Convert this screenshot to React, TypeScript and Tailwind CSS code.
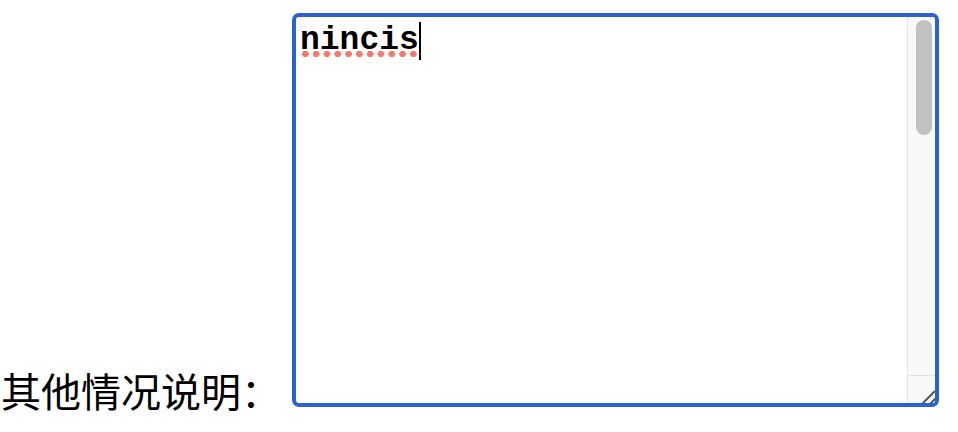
import React from 'react';

const App: React.FC = () => {
  return (
    <div className="w-[958px] h-[432px] bg-white flex items-end pb-[25px] overflow-hidden">
      {/* Label */}
      <div
        className="pl-[1px] mb-[-3px] text-[40px] leading-none text-black whitespace-nowrap"
        style={{ fontFamily: '"Noto Sans CJK SC", "Noto Sans", sans-serif' }}
      >
        其他情况说明：
      </div>

      {/* Textarea */}
      <div className="ml-auto mr-[19px] w-[647px] h-[394px] border-4 border-[#2a62d0] rounded-[7px] bg-white flex overflow-hidden">
        <div className="flex-1 pl-[4px] pt-[5px]">
          <div
            className="flex items-start text-[33px] leading-[38px] font-bold text-black"
            style={{ fontFamily: '"Liberation Mono", "Courier New", monospace' }}
          >
            <span className="relative inline-block">
              nincis
              <span className="absolute left-[0px] right-[-2px] top-[28px] h-[8px] bg-[radial-gradient(circle,#f07a6c_3px,transparent_3.5px)] bg-[length:10.8px_8px] bg-repeat-x" />
            </span>
            <span className="inline-block w-[2px] h-[38px] bg-black" />
          </div>
        </div>

        {/* Scrollbar */}
        <div className="w-[28px] border-l border-[#e4e4e4] bg-[#f8f8f8] flex flex-col">
          <div className="flex-1 pt-[3px] pl-[8px]">
            <div className="w-[16px] h-[115px] rounded-full bg-[#c1c1c1]" />
          </div>
          <div className="h-[28px] border-t border-[#e4e4e4] -ml-px border-l bg-[#f8f8f8]">
            <svg width="28" height="28" viewBox="0 0 28 28">
              <line x1="14" y1="28" x2="27" y2="15" stroke="#555" strokeWidth="2" />
              <line x1="22" y1="28" x2="27.5" y2="22.5" stroke="#555" strokeWidth="2" />
            </svg>
          </div>
        </div>
      </div>
    </div>
  );
};

export default App;
